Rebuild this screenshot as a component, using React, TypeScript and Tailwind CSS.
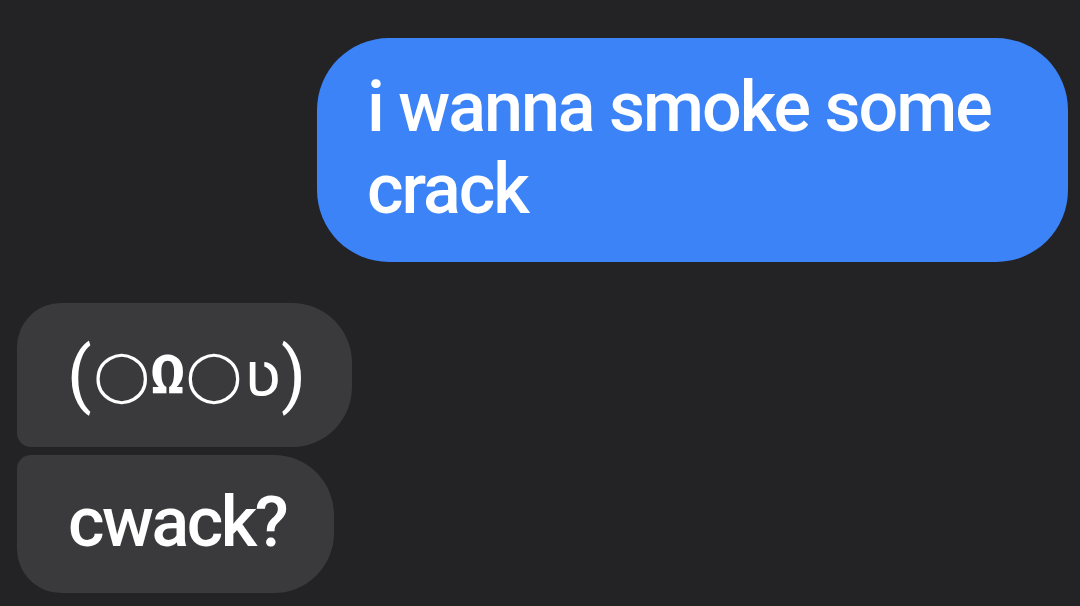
export default function App() {
  return (
    <div
      className="h-[606px] w-[1080px] overflow-hidden bg-[#232326] pt-[38px] text-white"
      style={{ fontFamily: 'Roboto, "Liberation Sans", "DejaVu Sans", sans-serif' }}
    >
      <div className="flex flex-col">
        <div className="mr-[12px] ml-auto w-[751px] rounded-[72px] bg-[#3b83f6] pt-[28px] pb-[32px] pl-[50px] pr-[40px] text-[70px] font-medium leading-[82px] tracking-[-2px]">
          i wanna smoke some crack
        </div>

        <div className="mt-[41px] ml-[17px] flex flex-col items-start gap-[8px]">
          <div className="flex h-[144px] items-center rounded-tl-[44px] rounded-tr-[60px] rounded-br-[60px] rounded-bl-[14px] bg-[#3a3a3c] pl-[50px] pr-[46px] text-[72px] leading-none">
            <span>(</span>
            <span className="ml-[2px] text-[50px]" style={{ fontFamily: '"DejaVu Sans", sans-serif' }}>◯</span>
            <span className="text-[54px] font-bold">Ω</span>
            <span className="text-[50px]" style={{ fontFamily: '"DejaVu Sans", sans-serif' }}>◯</span>
            <span className="ml-[2px] text-[62px]" style={{ fontFamily: '"DejaVu Sans", sans-serif' }}>ʋ</span>
            <span>)</span>
          </div>
          <div className="rounded-tl-[14px] rounded-tr-[60px] rounded-br-[60px] rounded-bl-[44px] bg-[#3a3a3c] pt-[26px] pb-[30px] pl-[51px] pr-[48px] text-[70px] font-medium leading-[82px] tracking-[-2.5px]">
            cwack?
          </div>
        </div>
      </div>
    </div>
  );
}
